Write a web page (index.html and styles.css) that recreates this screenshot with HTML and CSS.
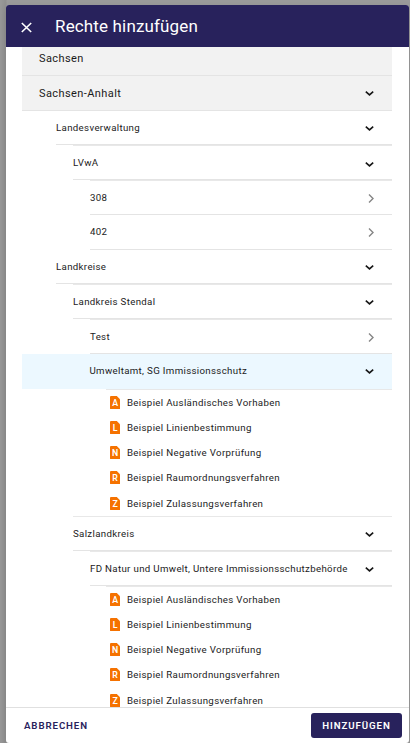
FILE: index.html
```
<!DOCTYPE html>
<html lang="de">
<head>
<meta charset="utf-8">
<title>Rechte hinzufügen</title>
<link rel="stylesheet" href="styles.css">
</head>
<body>
<svg class="defs" aria-hidden="true">
  <symbol id="down" viewBox="0 0 10 10"><path d="M.8 3.6l3.7 3.3 3.7-3.3" fill="none" stroke="#161616" stroke-width="1.6"/></symbol>
  <symbol id="right" viewBox="0 0 10 10"><path d="M3 1.5l4 4-4 4" fill="none" stroke="#858585" stroke-width="1.4"/></symbol>
  <symbol id="file" viewBox="0 0 10 13"><path d="M1 0h5.6L10 3.4V12a1 1 0 0 1-1 1H1a1 1 0 0 1-1-1V1a1 1 0 0 1 1-1z" fill="#f57200"/></symbol>
</svg>
<div class="dialog">
  <header class="header">
    <svg class="close" viewBox="0 0 11 11"><path d="M.8 1l9.4 9M10.2 1L.8 10" fill="none" stroke="#fff" stroke-width="1.6"/></svg>
    <h1 class="title">Rechte hinzufügen</h1>
  </header>
  <main class="content">
    <div class="row state"><span>Sachsen</span></div>
    <div class="row state"><span>Sachsen-Anhalt</span><svg class="chev"><use href="#down"/></svg></div>
    <div class="l1">
      <div class="row"><span>Landesverwaltung</span><svg class="chev"><use href="#down"/></svg></div>
      <div class="group">
        <div class="row"><span>LVwA</span><svg class="chev lower"><use href="#down"/></svg></div>
        <div class="group">
          <div class="row"><span>308</span><svg class="chev next"><use href="#right"/></svg></div>
          <div class="row tall"><span>402</span><svg class="chev next"><use href="#right"/></svg></div>
        </div>
      </div>
      <div class="row"><span>Landkreise</span><svg class="chev"><use href="#down"/></svg></div>
      <div class="group">
        <div class="row"><span>Landkreis Stendal</span><svg class="chev"><use href="#down"/></svg></div>
        <div class="group">
          <div class="row"><span>Test</span><svg class="chev next"><use href="#right"/></svg></div>
          <div class="row selected"><span>Umweltamt, SG Immissionsschutz</span><svg class="chev"><use href="#down"/></svg></div>
          <div class="group files">
            <div class="item"><svg class="file" viewBox="0 0 10 13"><use href="#file"/><text x="5" y="10">A</text></svg><span>Beispiel Ausländisches Vorhaben</span></div>
            <div class="item"><svg class="file" viewBox="0 0 10 13"><use href="#file"/><text x="5" y="10">L</text></svg><span>Beispiel Linienbestimmung</span></div>
            <div class="item"><svg class="file" viewBox="0 0 10 13"><use href="#file"/><text x="5" y="10">N</text></svg><span>Beispiel Negative Vorprüfung</span></div>
            <div class="item"><svg class="file" viewBox="0 0 10 13"><use href="#file"/><text x="5" y="10">R</text></svg><span>Beispiel Raumordnungsverfahren</span></div>
            <div class="item last"><svg class="file" viewBox="0 0 10 13"><use href="#file"/><text x="5" y="10">Z</text></svg><span>Beispiel Zulassungsverfahren</span></div>
          </div>
        </div>
      </div>
      <div class="group">
        <div class="row"><span>Salzlandkreis</span><svg class="chev low"><use href="#down"/></svg></div>
        <div class="group">
          <div class="row"><span>FD Natur und Umwelt, Untere Immissionsschutzbehörde</span><svg class="chev low"><use href="#down"/></svg></div>
          <div class="group files">
            <div class="item"><svg class="file" viewBox="0 0 10 13"><use href="#file"/><text x="5" y="10">A</text></svg><span>Beispiel Ausländisches Vorhaben</span></div>
            <div class="item"><svg class="file" viewBox="0 0 10 13"><use href="#file"/><text x="5" y="10">L</text></svg><span>Beispiel Linienbestimmung</span></div>
            <div class="item"><svg class="file" viewBox="0 0 10 13"><use href="#file"/><text x="5" y="10">N</text></svg><span>Beispiel Negative Vorprüfung</span></div>
            <div class="item"><svg class="file" viewBox="0 0 10 13"><use href="#file"/><text x="5" y="10">R</text></svg><span>Beispiel Raumordnungsverfahren</span></div>
            <div class="item last"><svg class="file" viewBox="0 0 10 13"><use href="#file"/><text x="5" y="10">Z</text></svg><span>Beispiel Zulassungsverfahren</span></div>
          </div>
        </div>
      </div>
    </div>
  </main>
  <footer class="footer">
    <button class="btn">ABBRECHEN</button>
    <button class="btn primary">HINZUFÜGEN</button>
  </footer>
</div>
</body>
</html>
```
FILE: styles.css
```
* { box-sizing: border-box; }
html, body { height: 100%; }
body {
  margin: 0;
  padding: 5px 1px 0 6px;
  overflow: hidden;
  background: linear-gradient(90deg, #999 0, #909090 6px, #9b9b9b 7px);
  font-family: Roboto, "Liberation Sans", sans-serif;
  color: #1b1b1b;
}
.defs { display: none; }
.dialog {
  display: flex;
  flex-direction: column;
  height: 100%;
  border-radius: 3px;
  background: #fff;
  overflow: hidden;
  box-shadow: 0 3px 8px rgba(0, 0, 0, .12);
}
.header {
  display: flex;
  flex: none;
  align-items: center;
  height: 42px;
  padding-left: 15px;
  gap: 23px;
  background: #28225c;
  color: #fff;
}
.close { width: 11px; height: 11px; margin-top: 2px; }
.title { margin: 0; font-size: 17px; font-weight: 400; letter-spacing: .15px; }
.content { flex: 1; min-height: 0; overflow: hidden; padding: 0 17px 0 16px; }
.row {
  display: flex;
  align-items: center;
  justify-content: space-between;
  height: 34px;
  padding-right: 17px;
  border-bottom: 1px solid #e4e4e4;
  font-size: 9.7px;
  letter-spacing: .33px;
  white-space: nowrap;
}
.state { height: 35px; padding-left: 17px; background: #f2f2f2; font-size: 11px; letter-spacing: .41px; }
.state:first-child { margin-top: -6px; }
.tall { height: 35px; padding-bottom: 1px; }
.chev { width: 10px; height: 10px; }
.low { margin-top: 1px; }
.lower { margin-top: 2px; }
.next { margin-right: -1px; }
.l1 { margin-left: 34px; }
.group { margin-left: 17px; border-top: 1px solid #e8e8e8; }
.selected {
  height: 35px;
  margin-left: -68px;
  padding-left: 67.5px;
  padding-bottom: 2px;
  border-bottom: 0;
  background: #ecf8ff;
}
.files { margin-left: 16px; }
.item {
  display: flex;
  align-items: center;
  height: 25px;
  padding-left: 3.7px;
  gap: 7px;
  font-size: 9.7px;
  letter-spacing: .34px;
  white-space: nowrap;
}
.item.last { height: 26px; padding-top: 1px; }
.file { width: 10.3px; height: 13.4px; }
.file text { fill: #fff; font-size: 8.5px; font-weight: 600; letter-spacing: 0; text-anchor: middle; }
.footer {
  display: flex;
  flex: none;
  align-items: center;
  justify-content: space-between;
  height: 36px;
  padding: 0 7px 0 8px;
  border-top: 1px solid #e0e0e0;
}
.btn {
  height: 25px;
  padding: 0 10px;
  border: 0;
  border-radius: 3px;
  background: none;
  color: #28225c;
  font: 600 9.7px Roboto, sans-serif;
  letter-spacing: .9px;
}
.primary { width: 91px; background: #28225c; color: #fff; }
```
